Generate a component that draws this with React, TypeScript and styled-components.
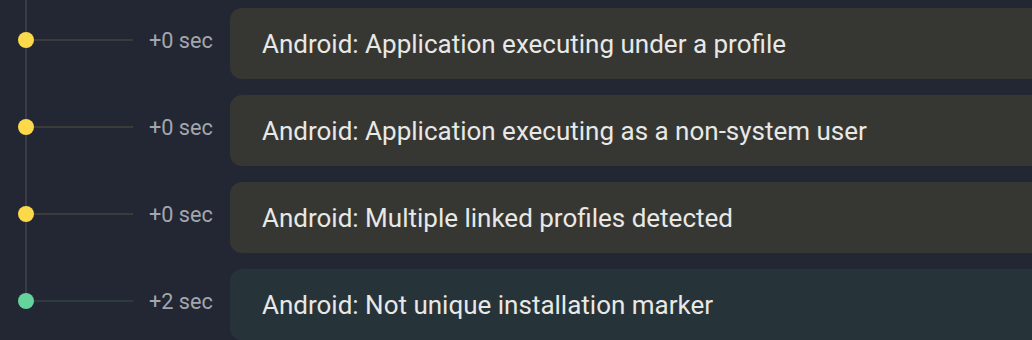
import React from "react";
import styled, { createGlobalStyle } from "styled-components";

const Global = createGlobalStyle`
  html, body { margin: 0; padding: 0; background: #222733; overflow: hidden; }
  body { font-family: Roboto, "Noto Sans", Arial, sans-serif; }
`;

type Tone = "warn" | "ok";

const palette: Record<Tone, { dot: string; line: string; card: string }> = {
  warn: { dot: "#fcd94a", line: "#3b3c38", card: "#363733" },
  ok: { dot: "#64d39c", line: "#2e3a3e", card: "#263439" },
};

const Page = styled.div`
  width: 1080px;
  height: 340px;
  padding: 8px 0 0 18px;
  box-sizing: border-box;
`;

const Timeline = styled.div`
  position: relative;
  display: flex;
  flex-direction: column;
  gap: 16px;
  &::before {
    content: "";
    position: absolute;
    left: 7px;
    top: -8px;
    bottom: 39px;
    width: 2px;
    background: #383c48;
  }
`;

const Row = styled.div`
  display: flex;
  align-items: flex-start;
  height: 71px;
`;

const Marker = styled.div`
  display: flex;
  align-items: center;
  margin-top: 24px;
  height: 16px;
  width: 212px;
  flex: none;
  position: relative;
`;

const Dot = styled.span<{ $tone: Tone }>`
  width: 16px;
  height: 16px;
  border-radius: 50%;
  background: ${(p) => palette[p.$tone].dot};
  flex: none;
  position: relative;
  z-index: 1;
`;

const Connector = styled.span<{ $tone: Tone }>`
  width: 99px;
  height: 2px;
  background: ${(p) => palette[p.$tone].line};
  flex: none;
`;

const Time = styled.span`
  margin-left: 16px;
  font-size: 21.7px;
  color: #a3a6ad;
  white-space: nowrap;
`;

const Card = styled.div<{ $tone: Tone }>`
  flex: 1;
  height: 71px;
  box-sizing: border-box;
  border-radius: 12px;
  background: ${(p) => palette[p.$tone].card};
  display: flex;
  align-items: center;
  padding-left: 32px;
  font-size: 26px;
  color: #e8e8e6;
  white-space: nowrap;
`;

const events: { time: string; text: string; tone: Tone }[] = [
  { time: "+0 sec", text: "Android: Application executing under a profile", tone: "warn" },
  { time: "+0 sec", text: "Android: Application executing as a non-system user", tone: "warn" },
  { time: "+0 sec", text: "Android: Multiple linked profiles detected", tone: "warn" },
  { time: "+2 sec", text: "Android: Not unique installation marker", tone: "ok" },
];

export default function App() {
  return (
    <Page>
      <Global />
      <Timeline>
        {events.map((e, i) => (
          <Row key={i}>
            <Marker>
              <Dot $tone={e.tone} />
              <Connector $tone={e.tone} />
              <Time>{e.time}</Time>
            </Marker>
            <Card $tone={e.tone}>{e.text}</Card>
          </Row>
        ))}
      </Timeline>
    </Page>
  );
}
